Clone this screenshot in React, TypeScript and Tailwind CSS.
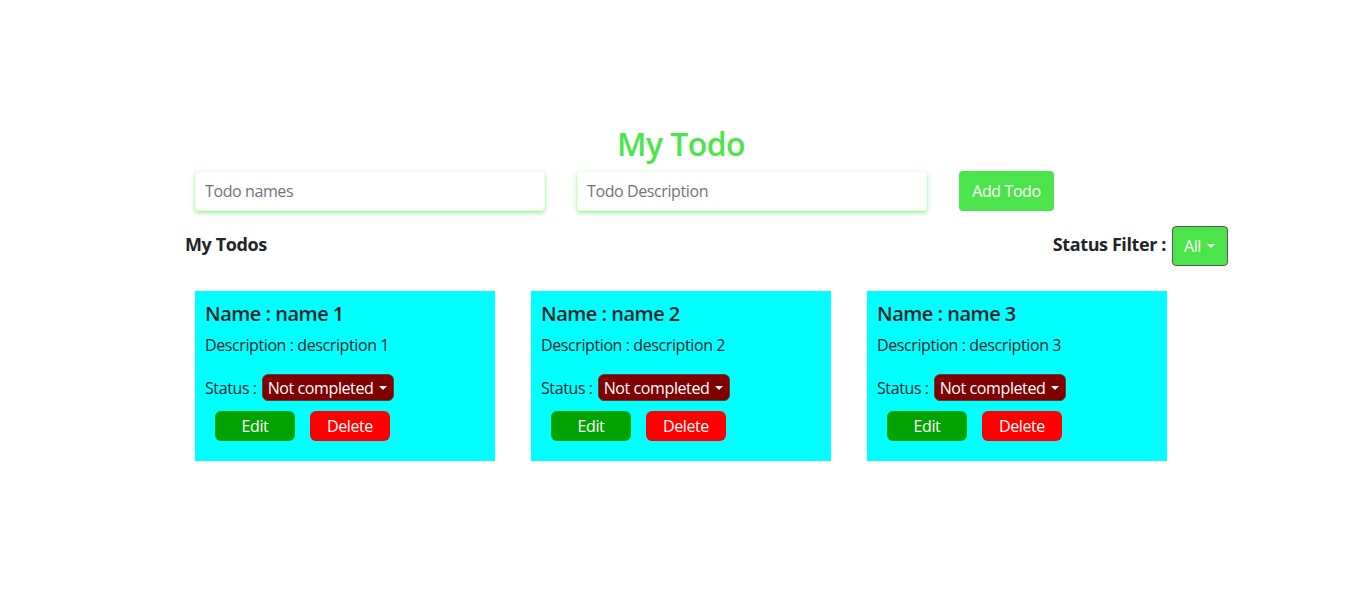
const todos = [
    { id: 1, name: 'name 1', description: 'description 1' },
    { id: 2, name: 'name 2', description: 'description 2' },
    { id: 3, name: 'name 3', description: 'description 3' },
]

function Caret() {
    return (
        <svg width="10" height="6" viewBox="0 0 10 6" className="ml-[5px]">
            <path d="M1 1 L5 5 L9 1 Z" fill="currentColor" />
        </svg>
    )
}

function TodoCard({ name, description }: { name: string; description: string }) {
    return (
        <div className="w-[300px] h-[170px] bg-[#00ffff] p-[10px] pt-[11px]">
            <h5 className="text-[20px] leading-[24px] font-semibold text-[#212529] tracking-[-0.5px]">Name : {name}</h5>
            <p className="mt-[7px] text-[16px] leading-[24px] text-[#212529]">Description : {description}</p>
            <div className="mt-[17px] flex items-center text-[16px] text-[#212529]">
                <span>Status :</span>
                <button className="ml-[5px] h-[27px] px-[5px] flex items-center rounded-[6px] border border-[#6c3b3b] bg-[#800000] text-white text-[16px]">
                    Not completed
                    <Caret />
                </button>
            </div>
            <div className="mt-[10px] ml-[10px] flex gap-[15px]">
                <button className="w-[80px] h-[30px] rounded-[6px] bg-[#00a300] text-white text-[16px]">Edit</button>
                <button className="w-[80px] h-[30px] rounded-[6px] bg-[#ff0000] text-white text-[16px]">Delete</button>
            </div>
        </div>
    )
}

export default function App() {
    return (
        <div className="min-h-[602px] bg-white pt-[124px] text-[#212529] tracking-[-0.4px]" style={{ fontFamily: '"Open Sans", "Noto Sans", sans-serif' }}>
            <h2 className="h-[40px] pl-[5px] text-center text-[32px] leading-[40px] font-semibold text-[#4be54b] tracking-[-0.6px]">My Todo</h2>
            <div className="mt-[7px] ml-[195px] flex items-center gap-[32px]">
                <input
                    placeholder="Todo names"
                    className="w-[350px] h-[40px] rounded-[4px] bg-white px-[9px] text-[16px] outline-none placeholder:text-[#6c757d] shadow-[0_2px_4px_rgba(76,229,76,0.6)] border border-[#eaffea]"
                />
                <input
                    placeholder="Todo Description"
                    className="w-[350px] h-[40px] rounded-[4px] bg-white px-[9px] text-[16px] outline-none placeholder:text-[#6c757d] shadow-[0_2px_4px_rgba(76,229,76,0.6)] border border-[#eaffea]"
                />
                <button className="w-[95px] h-[40px] rounded-[4px] bg-[#4be54b] text-white text-[16px]">Add Todo</button>
            </div>
            <div className="mt-[15px] ml-[185px] w-[1043px] flex items-center justify-between">
                <h4 className="pb-[4px] text-[18px] font-bold">My Todos</h4>
                <div className="flex items-center">
                    <span className="pb-[4px] text-[18px] font-bold">Status Filter :</span>
                    <button className="ml-[6px] w-[56px] h-[40px] flex items-center justify-center rounded-[4px] border border-[#5a5a5a] bg-[#4be54b] text-white text-[16px]">
                        All
                        <Caret />
                    </button>
                </div>
            </div>
            <div className="mt-[25px] ml-[195px] flex gap-[36px]">
                {todos.map((t) => (
                    <TodoCard key={t.id} name={t.name} description={t.description} />
                ))}
            </div>
        </div>
    )
}
